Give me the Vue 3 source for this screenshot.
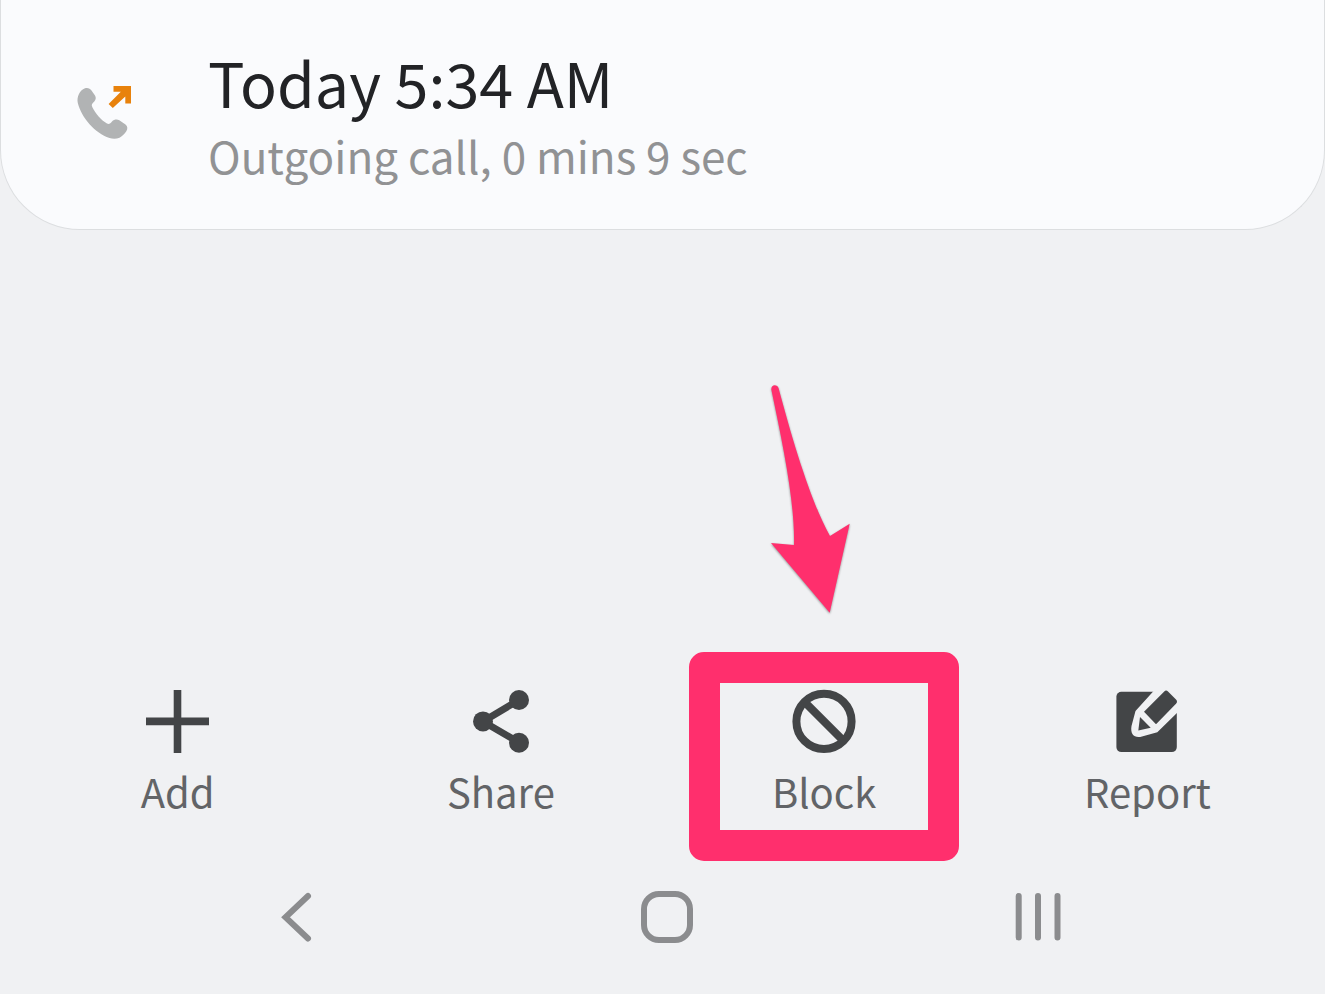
<template>
  <div class="screen">
    <section class="call-card">
      <svg class="call-card__icon" viewBox="0 0 56 64" aria-hidden="true">
        <path
          fill="#b1b3b4"
          d="M9 4.3C12 3.6 14 4.5 15.5 6.5L19 11.5C20.2 13.5 20 15.500 18.3 17.5C16 19.5 15 21 16.5 23.5C19.5 29.5 25 36 31 39.6C33 40.6 34.5 39.5 36 37.5C38 35.4 41 35 43.3 36.2L49.5 40.5C51.8 42.5 51.8 45 50.3 47.3C48.5 50 46 52.5 43.5 53.8C40.5 55 36.5 55 33.5 54C19 49 5.5 34 1.8 19C0.6 13.5 3.5 6 9 4.3Z"
        />
        <path fill="#e8820c" d="M37.5 2H55V19.5H49.3V12.5L36.8 24L32.6 20L44.8 7.8H37.5Z" />
      </svg>
      <div class="call-card__text">
        <h1 class="call-card__time">{{ call.time }}</h1>
        <p class="call-card__detail">{{ call.detail }}</p>
      </div>
    </section>

    <ul class="actions">
      <li v-for="action in actions" :key="action.id" class="actions__item">
        <button type="button" class="action">
          <svg class="action__icon" viewBox="0 0 64 64" aria-hidden="true">
            <path v-if="action.id === 'add'" d="M0 32.4H63M31.5 1V64" fill="none" stroke="#434547" stroke-width="7.6" />
            <g v-else-if="action.id === 'share'" fill="#434547">
              <path d="M50 11L14 32.4L50 53.5" fill="none" stroke="#434547" stroke-width="7" />
              <circle cx="50" cy="11" r="10" />
              <circle cx="14" cy="32.4" r="10" />
              <circle cx="50" cy="53.7" r="10" />
            </g>
            <g v-else-if="action.id === 'block'" fill="none" stroke="#434547" stroke-width="8">
              <circle cx="32" cy="32.4" r="27.6" />
              <path d="M13 13.4L51 51.4" />
            </g>
            <g v-else fill="#434547">
              <rect x="1.4" y="2.7" width="60.4" height="60.4" rx="5" />
              <path d="M39.5 1L20.5 22L16.5 37C15 46 20 49.5 27 47.5L42.3 43.3L64 22V0Z" fill="#f0f1f3" />
              <path d="M29 22.7L49 2.7Q51 0.5 53 2.5L61 10.5Q63 12.7 61 14.7L41 35.3Z" />
              <path d="M25 28L35.7 38.7L23.3 41.5Z" />
            </g>
          </svg>
          <span class="action__label">{{ action.label }}</span>
        </button>
        <div v-if="action.id === highlighted" class="marker">
          <svg class="marker__arrow" viewBox="0 0 84 236" aria-hidden="true">
            <path
              fill="#ff2f6d"
              d="M1.3 6.5C1 1 7.5 1 8.7 5.5C24 63 42 121 60 153L79.7 140.7L59.7 229.7L1 160L24 162C25 120 13 62 1.3 6.5Z"
            />
          </svg>
        </div>
      </li>
    </ul>

    <nav class="system-nav">
      <button type="button" class="system-nav__button" aria-label="Back">
        <svg class="system-nav__icon" viewBox="0 0 52 52" aria-hidden="true">
          <path d="M37 5L14.5 26.3L37 47.5" stroke-linecap="round" />
        </svg>
      </button>
      <button type="button" class="system-nav__button" aria-label="Home">
        <svg class="system-nav__icon" viewBox="0 0 52 52" aria-hidden="true">
          <rect x="3" y="3" width="46" height="46" rx="15" />
        </svg>
      </button>
      <button type="button" class="system-nav__button" aria-label="Recents">
        <svg class="system-nav__icon" viewBox="0 0 52 52" aria-hidden="true">
          <path d="M6.7 5V46.500M26 5V46.500M45.500 5V46.500" stroke-linecap="round" />
        </svg>
      </button>
    </nav>
  </div>
</template>

<script setup>
import { ref } from "vue";

const call = {
  time: "Today 5:34 AM",
  detail: "Outgoing call, 0 mins 9 sec",
};

const actions = [
  { id: "add", label: "Add" },
  { id: "share", label: "Share" },
  { id: "block", label: "Block" },
  { id: "report", label: "Report" },
];

const highlighted = ref("block");
</script>

<style>
body {
  margin: 0;
  background: #f0f1f3;
}
</style>

<style scoped>
.screen {
  display: flex;
  flex-direction: column;
  min-height: 100vh;
  background: #f0f1f3;
  font-family: "Noto Sans CJK SC", "Noto Sans", sans-serif;
}
.call-card {
  display: flex;
  align-items: center;
  gap: 76px;
  padding: 43px 75px 40px;
  border: 1px solid #dcdee0;
  border-top: 0;
  border-radius: 0 0 80px 80px;
  background: #fafbfd;
}
.call-card__icon {
  flex: none;
  width: 56px;
  height: 64px;
}
.call-card__time {
  margin: 0;
  font-size: 61px;
  font-weight: 400;
  line-height: 78px;
  color: #222326;
}
.call-card__detail {
  margin: 0;
  font-size: 44px;
  line-height: 68px;
  color: #919294;
}
.actions {
  display: flex;
  margin: auto 0 0;
  padding: 0 16px;
  list-style: none;
}
.actions__item {
  position: relative;
  flex: 1;
  display: flex;
  justify-content: center;
}
.action {
  display: flex;
  flex-direction: column;
  align-items: center;
  gap: 10px;
  padding: 0;
  border: 0;
  background: none;
  font-family: inherit;
  color: #626467;
  cursor: pointer;
}
.action__icon {
  width: 64px;
  height: 64px;
}
.action__label {
  font-size: 40px;
  line-height: 56px;
}
/* frame drawn around the button, with the arrow above it */
.marker {
  position: absolute;
  top: -37px;
  left: 50%;
  box-sizing: border-box;
  width: 270px;
  height: 209px;
  border: 31px solid #ff2f6d;
  border-radius: 15px;
  transform: translateX(-50%);
  pointer-events: none;
}
.marker__arrow {
  position: absolute;
  bottom: calc(100% + 64px);
  left: 50px;
  width: 84px;
  height: 236px;
  filter: drop-shadow(0 1px 1px rgba(0, 0, 0, 0.4));
}
.system-nav {
  display: flex;
  padding: 72px 102px 51px 112px;
}
.system-nav__button {
  flex: 1;
  display: flex;
  justify-content: center;
  padding: 0;
  border: 0;
  background: none;
  cursor: pointer;
}
.system-nav__icon {
  width: 52px;
  height: 52px;
  fill: none;
  stroke: #8b8c8e;
  stroke-width: 6;
}
</style>
